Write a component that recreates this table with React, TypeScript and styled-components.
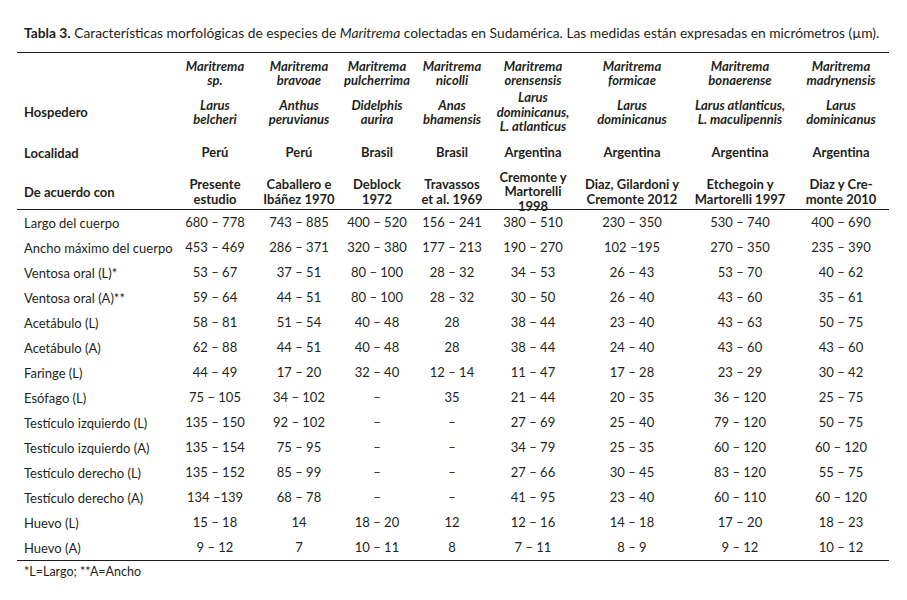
import React from "react";
import styled, { createGlobalStyle } from "styled-components";

const GlobalStyle = createGlobalStyle`
  html, body {
    margin: 0;
    padding: 0;
    background: #fff;
  }
  body {
    font-family: Lato, "Open Sans", sans-serif;
    color: #231f20;
  }
`;

const COLUMNS = "154px 88px 80px 76px 74px 88px 110px 106px 96px";

const Page = styled.div`
  width: 907px;
  padding: 24px 0 0 17px;
  box-sizing: border-box;
`;

const Caption = styled.div`
  font-size: 13.8px;
  line-height: 18px;
  padding-left: 7px;
  white-space: nowrap;
  margin-bottom: 10px;

  b {
    font-weight: 700;
  }
`;

const Table = styled.div`
  width: 872px;
  border-top: 1.5px solid #1a1a1a;
  border-bottom: 1.5px solid #1a1a1a;
`;

const Head = styled.div`
  border-bottom: 1.5px solid #1a1a1a;
`;

const Row = styled.div<{ $h: number }>`
  display: grid;
  grid-template-columns: ${COLUMNS};
  grid-template-rows: ${(p) => p.$h}px;
  height: ${(p) => p.$h}px;
  align-items: center;
  font-size: 13px;
`;

const Label = styled.div<{ $bold?: boolean }>`
  padding-left: 7px;
  white-space: nowrap;
  font-weight: ${(p) => (p.$bold ? 700 : 400)};
`;

const Cell = styled.div<{ $bold?: boolean; $italic?: boolean }>`
  text-align: center;
  line-height: 14.5px;
  white-space: nowrap;
  font-weight: ${(p) => (p.$bold ? 700 : 400)};
  font-style: ${(p) => (p.$italic ? "italic" : "normal")};
`;

const Footnote = styled.div`
  font-size: 12.5px;
  padding: 3px 0 0 7px;
`;

const species = [
  ["Maritrema", "sp."],
  ["Maritrema", "bravoae"],
  ["Maritrema", "pulcherrima"],
  ["Maritrema", "nicolli"],
  ["Maritrema", "orensensis"],
  ["Maritrema", "formicae"],
  ["Maritrema", "bonaerense"],
  ["Maritrema", "madrynensis"],
];

const hosts = [
  ["Larus", "belcheri"],
  ["Anthus", "peruvianus"],
  ["Didelphis", "aurira"],
  ["Anas", "bhamensis"],
  ["Larus", "dominicanus,", "L. atlanticus"],
  ["Larus", "dominicanus"],
  ["Larus atlanticus,", "L. maculipennis"],
  ["Larus", "dominicanus"],
];

const places = ["Perú", "Perú", "Brasil", "Brasil", "Argentina", "Argentina", "Argentina", "Argentina"];

const sources = [
  ["Presente", "estudio"],
  ["Caballero e", "Ibáñez 1970"],
  ["Deblock", "1972"],
  ["Travassos", "et al. 1969"],
  ["Cremonte y", "Martorelli", "1998"],
  ["Diaz, Gilardoni y", "Cremonte 2012"],
  ["Etchegoin y", "Martorelli 1997"],
  ["Diaz y Cre-", "monte 2010"],
];

const data: [string, string[]][] = [
  ["Largo del cuerpo", ["680 – 778", "743 – 885", "400 – 520", "156 – 241", "380 – 510", "230 – 350", "530 – 740", "400 – 690"]],
  ["Ancho máximo del cuerpo", ["453 – 469", "286 – 371", "320 – 380", "177 – 213", "190 – 270", "102 –195", "270 – 350", "235 – 390"]],
  ["Ventosa oral (L)*", ["53 – 67", "37 – 51", "80 – 100", "28 – 32", "34 – 53", "26 – 43", "53 – 70", "40 – 62"]],
  ["Ventosa oral (A)**", ["59 – 64", "44 – 51", "80 – 100", "28 – 32", "30 – 50", "26 – 40", "43 – 60", "35 – 61"]],
  ["Acetábulo (L)", ["58 – 81", "51 – 54", "40 – 48", "28", "38 – 44", "23 – 40", "43 – 63", "50 – 75"]],
  ["Acetábulo (A)", ["62 – 88", "44 – 51", "40 – 48", "28", "38 – 44", "24 – 40", "43 – 60", "43 – 60"]],
  ["Faringe (L)", ["44 – 49", "17 – 20", "32 – 40", "12 – 14", "11 – 47", "17 – 28", "23 – 29", "30 – 42"]],
  ["Esófago (L)", ["75 – 105", "34 – 102", "–", "35", "21 – 44", "20 – 35", "36 – 120", "25 – 75"]],
  ["Testículo izquierdo (L)", ["135 – 150", "92 – 102", "–", "–", "27 – 69", "25 – 40", "79 – 120", "50 – 75"]],
  ["Testículo izquierdo (A)", ["135 – 154", "75 – 95", "–", "–", "34 – 79", "25 – 35", "60 – 120", "60 – 120"]],
  ["Testículo derecho (L)", ["135 – 152", "85 – 99", "–", "–", "27 – 66", "30 – 45", "83 – 120", "55 – 75"]],
  ["Testículo derecho (A)", ["134 –139", "68 – 78", "–", "–", "41 – 95", "23 – 40", "60 – 110", "60 – 120"]],
  ["Huevo (L)", ["15 – 18", "14", "18 – 20", "12", "12 – 16", "14 – 18", "17 – 20", "18 – 23"]],
  ["Huevo (A)", ["9 – 12", "7", "10  – 11", "8", "7 – 11", "8 – 9", "9 – 12", "10 – 12"]],
];

function Lines({ lines }: { lines: string[] }) {
  return (
    <>
      {lines.map((l, i) => (
        <div key={i}>{l}</div>
      ))}
    </>
  );
}

export default function App() {
  return (
    <Page>
      <GlobalStyle />
      <Caption>
        <b>Tabla 3.</b> Características morfológicas de especies de <i>Maritrema</i> colectadas en
        Sudamérica. Las medidas están expresadas en micrómetros (µm).
      </Caption>
      <Table>
        <Head>
          <Row $h={40}>
            <Label />
            {species.map((s, i) => (
              <Cell key={i} $bold $italic>
                <Lines lines={s} />
              </Cell>
            ))}
          </Row>
          <Row $h={38}>
            <Label $bold>Hospedero</Label>
            {hosts.map((s, i) => (
              <Cell key={i} $bold $italic>
                <Lines lines={s} />
              </Cell>
            ))}
          </Row>
          <Row $h={43}>
            <Label $bold>Localidad</Label>
            {places.map((s, i) => (
              <Cell key={i} $bold>
                {s}
              </Cell>
            ))}
          </Row>
          <Row $h={35}>
            <Label $bold>De acuerdo con</Label>
            {sources.map((s, i) => (
              <Cell key={i} $bold>
                <Lines lines={s} />
              </Cell>
            ))}
          </Row>
        </Head>
        {data.map(([label, values]) => (
          <Row key={label} $h={25}>
            <Label>{label}</Label>
            {values.map((v, i) => (
              <Cell key={i}>{v}</Cell>
            ))}
          </Row>
        ))}
      </Table>
      <Footnote>*L=Largo; **A=Ancho</Footnote>
    </Page>
  );
}
